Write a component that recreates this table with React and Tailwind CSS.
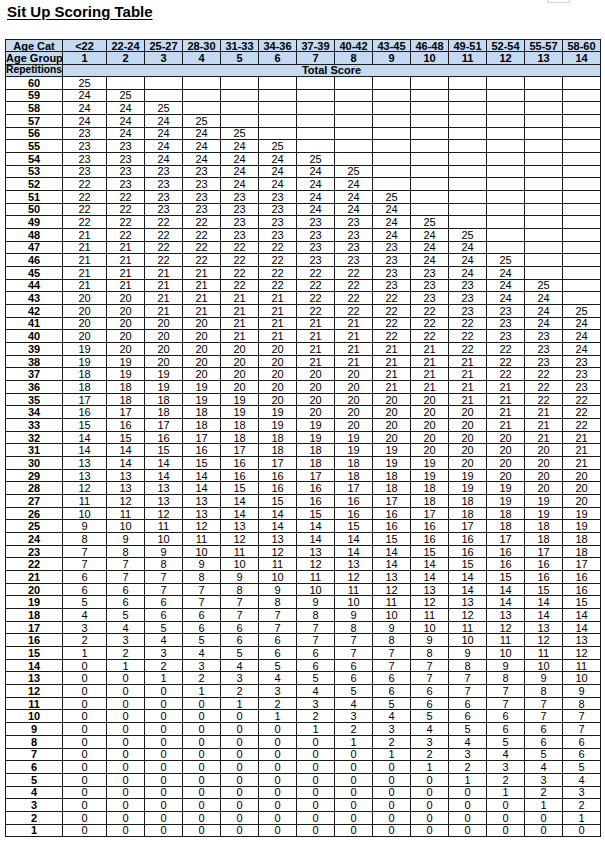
import React from "react";

const groups = [
  ["<22", 1], ["22-24", 2], ["25-27", 3], ["28-30", 4], ["31-33", 5], ["34-36", 6], ["37-39", 7],
  ["40-42", 8], ["43-45", 9], ["46-48", 10], ["49-51", 11], ["52-54", 12], ["55-57", 13], ["58-60", 14],
];

// scores per repetition count, left to right by age group
const scores = {
  60: "25",
  59: "24 25",
  58: "24 24 25",
  57: "24 24 24 25",
  56: "23 24 24 24 25",
  55: "23 23 24 24 24 25",
  54: "23 23 24 24 24 24 25",
  53: "23 23 23 23 24 24 24 25",
  52: "22 23 23 23 24 24 24 24",
  51: "22 22 23 23 23 23 24 24 25",
  50: "22 22 23 23 23 23 24 24 24",
  49: "22 22 22 22 23 23 23 23 24 25",
  48: "21 22 22 22 23 23 23 23 24 24 25",
  47: "21 21 22 22 22 22 23 23 23 24 24",
  46: "21 21 22 22 22 22 23 23 23 24 24 25",
  45: "21 21 21 21 22 22 22 22 23 23 24 24",
  44: "21 21 21 21 22 22 22 22 23 23 23 24 25",
  43: "20 20 21 21 21 21 22 22 22 23 23 24 24",
  42: "20 20 21 21 21 21 22 22 22 22 23 23 24 25",
  41: "20 20 20 20 21 21 21 21 22 22 22 23 24 24",
  40: "20 20 20 20 21 21 21 21 22 22 22 23 23 24",
  39: "19 20 20 20 20 20 21 21 21 21 22 22 23 24",
  38: "19 19 20 20 20 20 21 21 21 21 21 22 23 23",
  37: "18 19 19 20 20 20 20 20 21 21 21 22 22 23",
  36: "18 18 19 19 20 20 20 20 21 21 21 21 22 23",
  35: "17 18 18 19 19 20 20 20 20 20 21 21 22 22",
  34: "16 17 18 18 19 19 20 20 20 20 20 21 21 22",
  33: "15 16 17 18 18 19 19 20 20 20 20 21 21 22",
  32: "14 15 16 17 18 18 19 19 20 20 20 20 21 21",
  31: "14 14 15 16 17 18 18 19 19 20 20 20 20 21",
  30: "13 14 14 15 16 17 18 18 19 19 20 20 20 21",
  29: "13 13 14 14 16 16 17 18 18 19 19 20 20 20",
  28: "12 13 13 14 15 16 16 17 18 18 19 19 20 20",
  27: "11 12 13 13 14 15 16 16 17 18 18 19 19 20",
  26: "10 11 12 13 14 14 15 16 16 17 18 18 19 19",
  25: "9 10 11 12 13 14 14 15 16 16 17 18 18 19",
  24: "8 9 10 11 12 13 14 14 15 16 16 17 18 18",
  23: "7 8 9 10 11 12 13 14 14 15 16 16 17 18",
  22: "7 7 8 9 10 11 12 13 14 14 15 16 16 17",
  21: "6 7 7 8 9 10 11 12 13 14 14 15 16 16",
  20: "6 6 7 7 8 9 10 11 12 13 14 14 15 16",
  19: "5 6 6 7 7 8 9 10 11 12 13 14 14 15",
  18: "4 5 6 6 7 7 8 9 10 11 12 13 14 14",
  17: "3 4 5 6 6 7 7 8 9 10 11 12 13 14",
  16: "2 3 4 5 6 6 7 7 8 9 10 11 12 13",
  15: "1 2 3 4 5 6 6 7 7 8 9 10 11 12",
  14: "0 1 2 3 4 5 6 6 7 7 8 9 10 11",
  13: "0 0 1 2 3 4 5 6 6 7 7 8 9 10",
  12: "0 0 0 1 2 3 4 5 6 6 7 7 8 9",
  11: "0 0 0 0 1 2 3 4 5 6 6 7 7 8",
  10: "0 0 0 0 0 1 2 3 4 5 6 6 7 7",
  9: "0 0 0 0 0 0 1 2 3 4 5 6 6 7",
  8: "0 0 0 0 0 0 0 1 2 3 4 5 6 6",
  7: "0 0 0 0 0 0 0 0 1 2 3 4 5 6",
  6: "0 0 0 0 0 0 0 0 0 1 2 3 4 5",
  5: "0 0 0 0 0 0 0 0 0 0 1 2 3 4",
  4: "0 0 0 0 0 0 0 0 0 0 0 1 2 3",
  3: "0 0 0 0 0 0 0 0 0 0 0 0 1 2",
  2: "0 0 0 0 0 0 0 0 0 0 0 0 0 1",
  1: "0 0 0 0 0 0 0 0 0 0 0 0 0 0",
};

const reps = Array.from({ length: 60 }, (_, i) => 60 - i);

const cell = "border border-[#1a1a1a] p-0 text-center whitespace-nowrap overflow-visible";
const head = cell + " bg-[#c5d9f1] font-bold";

export default function App() {
  return (
    <div className="relative min-h-[843px] w-[605px] bg-white text-black" style={{ fontFamily: '"Liberation Sans", Arial, sans-serif' }}>
      <div className="absolute left-[547px] top-0 h-[3px] w-[23px] border border-t-0 border-gray-300" />

      <div className="pl-[7px] pt-[3px]">
        <h1 className="text-[15px] font-bold leading-[18px] underline underline-offset-2">Sit Up Scoring Table</h1>
      </div>

      <div className="mt-[18px] pl-[5px]">
        <table className="w-[595px] table-fixed border-collapse text-[11px] leading-[10px]">
          <colgroup>
            <col className="w-[57px]" />
            <col className="w-[44px]" />
            {groups.slice(1).map(([c]) => (
              <col key={c} className="w-[38px]" />
            ))}
          </colgroup>
          <thead>
            <tr className="h-[12.3px]">
              <th className={head}>Age Cat</th>
              {groups.map(([c]) => (
                <th key={c} className={head}>{c}</th>
              ))}
            </tr>
            <tr className="h-[12.3px]">
              <th className={head}>Age Group</th>
              {groups.map(([c, g]) => (
                <th key={c} className={head}>{g}</th>
              ))}
            </tr>
            <tr className="h-[12.3px]">
              <th className={head + " text-left text-[10.3px]"}>Repetitions</th>
              <th colSpan={14} className={head}>Total Score</th>
            </tr>
          </thead>
          <tbody>
            {reps.map((r) => {
              const vals = scores[r].split(" ");
              return (
                <tr key={r} className="h-[12.68px]">
                  <td className={cell + " font-bold"}>{r}</td>
                  {groups.map(([c], i) => (
                    <td key={c} className={cell}>{vals[i] ?? ""}</td>
                  ))}
                </tr>
              );
            })}
          </tbody>
        </table>
      </div>
    </div>
  );
}
